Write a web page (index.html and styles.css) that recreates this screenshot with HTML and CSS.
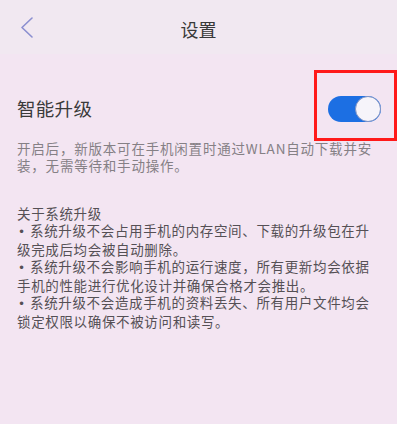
FILE: index.html
```html
<!DOCTYPE html>
<html lang="zh-CN">
<head>
<meta charset="utf-8">
<title>设置</title>
<link rel="stylesheet" href="styles.css">
</head>
<body>
<div class="screen">
  <header class="header">
    <svg class="back" width="12" height="21" viewBox="0 0 12 21"><polyline points="11,1 1,10.5 11,20" fill="none" stroke="#8b8fd0" stroke-width="1.6" stroke-linecap="round" stroke-linejoin="round"/></svg>
    <div class="title">设置</div>
  </header>
  <section class="row">
    <div class="row-label">智能升级</div>
    <div class="toggle"><span class="knob"></span></div>
    <div class="highlight"></div>
  </section>
  <p class="desc">开启后，新版本可在手机闲置时通过WLAN自动下载并安装，无需等待和手动操作。</p>
  <div class="about">
    <div class="about-title">关于系统升级</div>
    <div class="item"><span class="dot">•</span>系统升级不会占用手机的内存空间、下载的升级包在升级完成后均会被自动删除。</div>
    <div class="item"><span class="dot">•</span>系统升级不会影响手机的运行速度，所有更新均会依据手机的性能进行优化设计并确保合格才会推出。</div>
    <div class="item"><span class="dot">•</span>系统升级不会造成手机的资料丢失、所有用户文件均会锁定权限以确保不被访问和读写。</div>
  </div>
</div>
</body>
</html>
```
FILE: styles.css
```css
html, body {
  margin: 0;
  padding: 0;
  background: #ffffff;
}
.screen {
  position: relative;
  width: 397px;
  height: 424px;
  background: #f3e5f2;
  font-family: "Noto Sans CJK SC", "Noto Sans", sans-serif;
  overflow: hidden;
}
.header {
  height: 54px;
  display: flex;
  align-items: center;
  justify-content: center;
  position: relative;
  background: #f1e8f1;
}
.back {
  position: absolute;
  left: 21px;
  top: 17px;
}
.title {
  font-size: 18px;
  color: #383838;
  margin-top: 4px;
}
.row {
  position: relative;
  display: flex;
  align-items: center;
  justify-content: space-between;
  height: 44px;
  margin-top: 32px;
  padding: 0 16px 0 17px;
}
.row-label {
  font-size: 18.5px;
  color: #3a3a3a;
  letter-spacing: 0.3px;
}
.toggle {
  position: relative;
  width: 53px;
  height: 26px;
  border-radius: 13px;
  background: #1c6fe3;
  margin-top: 2px;
}
.knob {
  position: absolute;
  right: 0;
  top: 0;
  width: 24px;
  height: 24px;
  border-radius: 50%;
  background: #f6f4fa;
  border: 1px solid #7f93c4;
}
.highlight {
  position: absolute;
  left: 314px;
  top: -16px;
  width: 77px;
  height: 65px;
  border: 3px solid #ff1a1a;
}
.desc {
  margin: 10px 0 0 0;
  padding: 0 15px 0 17px;
  font-size: 13.5px;
  line-height: 17px;
  letter-spacing: 0.8px;
  color: #858085;
}
.about {
  margin-top: 31px;
  padding: 0 15px 0 17px;
  font-size: 13.5px;
  line-height: 17px;
  letter-spacing: 0.65px;
  color: #555055;
}
.dot {
  display: inline-block;
  width: 13px;
  font-family: "DejaVu Sans", sans-serif;
  font-size: 12px;
  line-height: 17px;
  letter-spacing: 0;
  text-indent: 1px;
}
```
